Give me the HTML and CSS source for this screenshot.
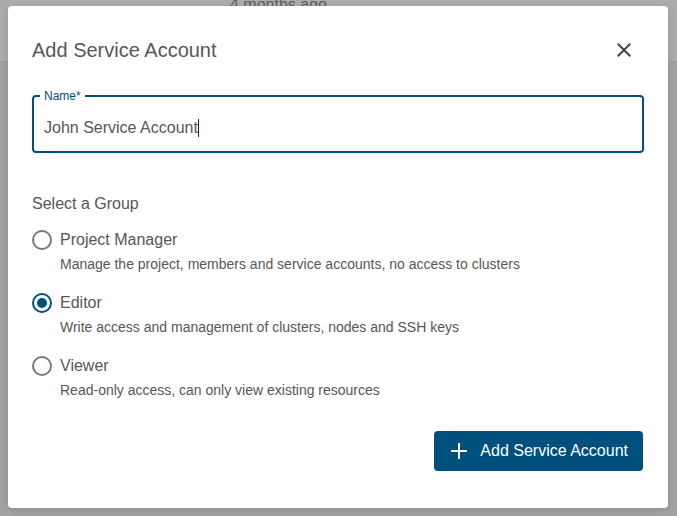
FILE: index.html
```html
<!DOCTYPE html>
<html lang="en">
<head>
<meta charset="utf-8">
<title>Add Service Account</title>
<link rel="stylesheet" href="styles.css">
</head>
<body>
<div class="behind">4 months ago</div>
<div class="dialog">
  <div class="dialog-head">
    <h1 class="dialog-title">Add Service Account</h1>
    <svg class="close" width="24" height="24" viewBox="0 0 24 24" aria-label="Close"><path d="M19 6.41L17.59 5 12 10.59 6.41 5 5 6.41 10.59 12 5 17.59 6.41 19 12 13.41 17.59 19 19 17.59 13.41 12z"/></svg>
  </div>
  <fieldset class="field">
    <legend class="field-label">Name*</legend>
    <div class="field-input">John Service Account<span class="caret"></span></div>
  </fieldset>
  <div class="group-title">Select a Group</div>
  <div class="options">
    <div class="option">
      <span class="radio"></span>
      <div class="option-text">
        <div class="option-label">Project Manager</div>
        <div class="option-desc">Manage the project, members and service accounts, no access to clusters</div>
      </div>
    </div>
    <div class="option">
      <span class="radio checked"></span>
      <div class="option-text">
        <div class="option-label">Editor</div>
        <div class="option-desc">Write access and management of clusters, nodes and SSH keys</div>
      </div>
    </div>
    <div class="option">
      <span class="radio"></span>
      <div class="option-text">
        <div class="option-label">Viewer</div>
        <div class="option-desc">Read-only access, can only view existing resources</div>
      </div>
    </div>
  </div>
  <div class="actions">
    <button class="btn">
      <svg width="17" height="16" viewBox="0 0 17 16"><path d="M9 0V16M1 8H17" stroke="#fff" stroke-width="2" fill="none"/></svg>
      <span>Add Service Account</span>
    </button>
  </div>
</div>
</body>
</html>
```
FILE: styles.css
```css
html, body {
  margin: 0;
  padding: 0;
}
body {
  width: 677px;
  height: 516px;
  overflow: hidden;
  font-family: "Liberation Sans", Arial, sans-serif;
  background: linear-gradient(to bottom, #ababab 0, #ababab 61px, #9e9e9e 61px, #9e9e9e 62px, #a2a2a2 62px, #a2a2a2 100%);
}
.behind {
  height: 6px;
  overflow: hidden;
  line-height: 10px;
  font-size: 16px;
  color: #5c5c5c;
  padding-left: 230px;
}
.dialog {
  box-sizing: border-box;
  width: 660px;
  margin-left: 8px;
  background: #fff;
  border-radius: 4px;
  padding: 28px 24px 37px 24px;
  box-shadow: 0 2px 6px rgba(0,0,0,0.12);
  color: #575757;
}
.dialog-head {
  display: flex;
  align-items: center;
  justify-content: space-between;
  height: 32px;
  margin-bottom: 23px;
}
.dialog-title {
  margin: 0;
  font-size: 20px;
  font-weight: normal;
  line-height: 32px;
  color: #575757;
}
.close {
  fill: #3f4a54;
  margin-right: 8px;
}
.field {
  margin: 0;
  padding: 0 8px 0 6px;
  border: 2px solid #00507e;
  border-radius: 4px;
}
.field-label {
  padding: 0 4px;
  font-size: 12px;
  line-height: 14px;
  color: #00507e;
}
.field-input {
  height: 46px;
  padding-top: 2px;
  line-height: 46px;
  font-size: 16px;
  padding-left: 4px;
  color: #575757;
}
.caret {
  display: inline-block;
  width: 1px;
  height: 18px;
  background: #222;
  vertical-align: -4px;
}
.group-title {
  margin-top: 41px;
  font-size: 16px;
  line-height: 20px;
}
.options {
  margin-top: 16px;
  display: flex;
  flex-direction: column;
  gap: 19px;
}
.option {
  display: flex;
  gap: 8px;
}
.radio {
  box-sizing: border-box;
  width: 20px;
  height: 20px;
  border: 2px solid #757a80;
  border-radius: 50%;
  flex: none;
  display: flex;
  align-items: center;
  justify-content: center;
}
.radio.checked {
  border-color: #00507e;
}
.radio.checked::after {
  content: "";
  width: 10px;
  height: 10px;
  border-radius: 50%;
  background: #00507e;
}
.option-label {
  font-size: 16px;
  line-height: 20px;
}
.option-desc {
  margin-top: 4px;
  font-size: 14px;
  line-height: 20px;
}
.actions {
  margin-top: 31px;
  display: flex;
  justify-content: flex-end;
}
.btn {
  display: flex;
  align-items: center;
  gap: 13px;
  height: 40px;
  padding: 0 15px 0 16px;
  margin-right: 1px;
  border: none;
  border-radius: 4px;
  background: #00507e;
  color: #fff;
  font-family: "Liberation Sans", Arial, sans-serif;
  font-size: 16px;
}
```
